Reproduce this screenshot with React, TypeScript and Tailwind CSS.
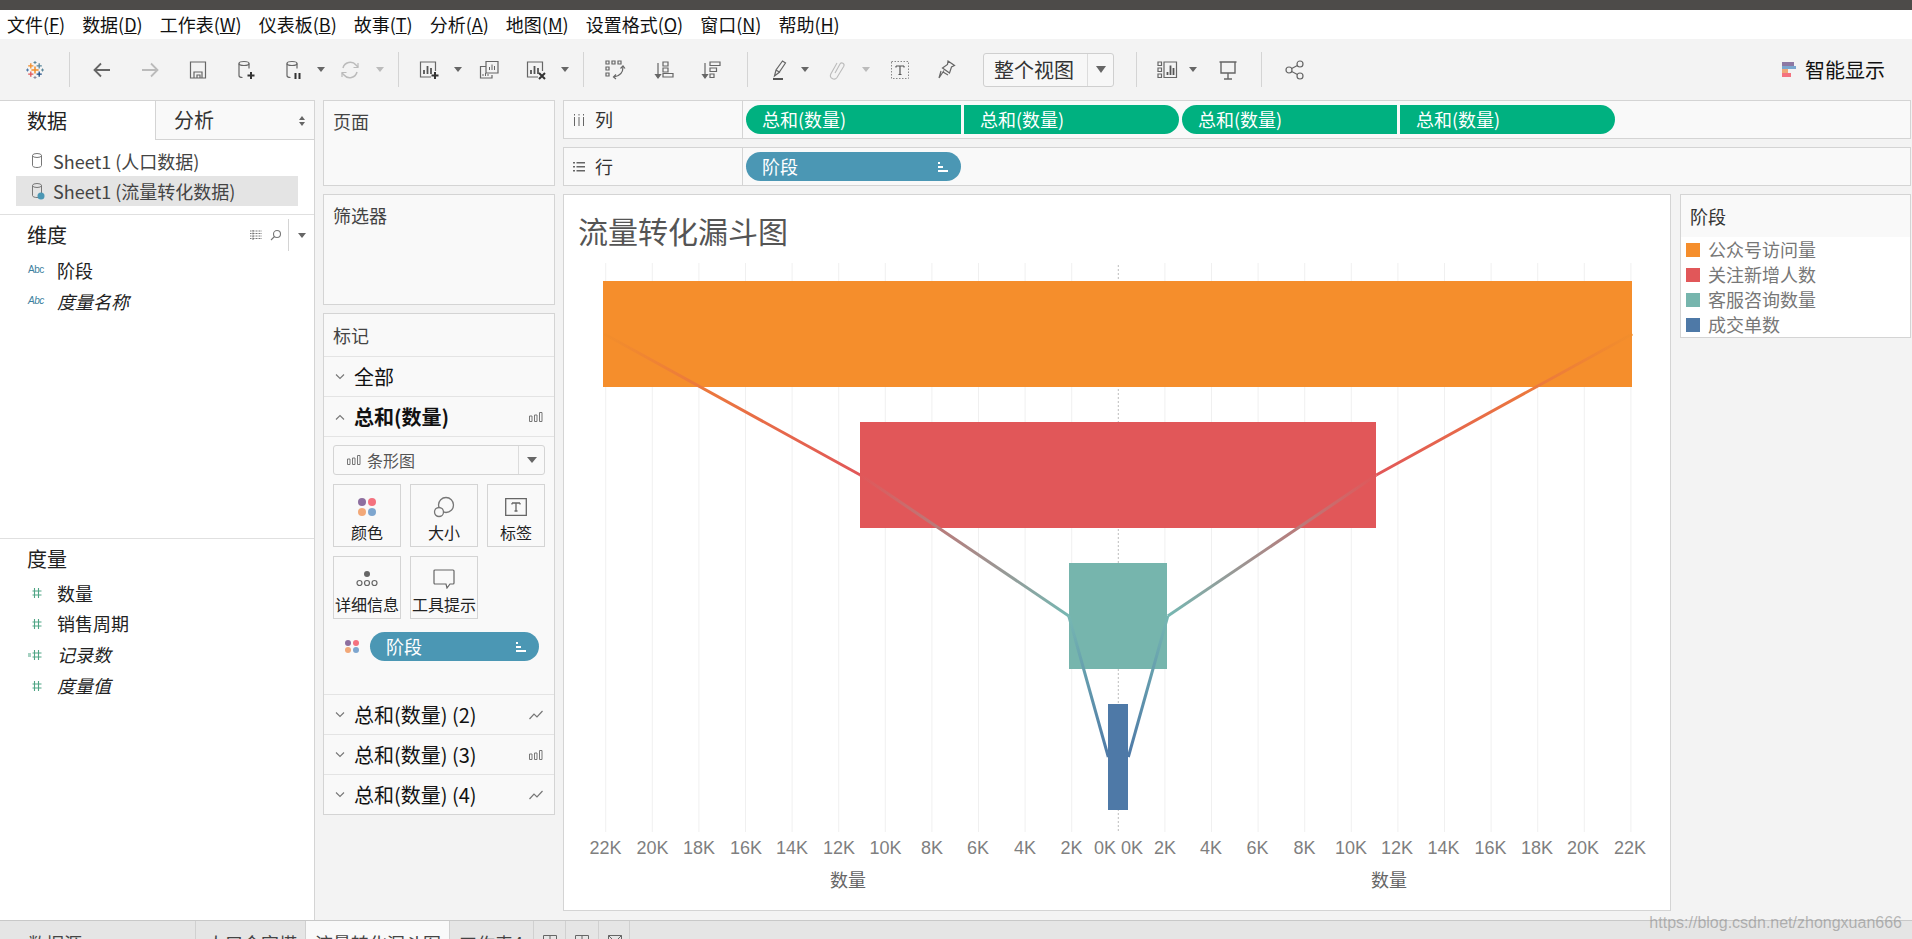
import type { ReactNode } from 'react';

const sans = 'font-["Noto_Sans_CJK_SC","Noto_Sans",sans-serif]';

const menus = [
  ['文件(', 'F'],
  ['数据(', 'D'],
  ['工作表(', 'W'],
  ['仪表板(', 'B'],
  ['故事(', 'T'],
  ['分析(', 'A'],
  ['地图(', 'M'],
  ['设置格式(', 'O'],
  ['窗口(', 'N'],
  ['帮助(', 'H'],
];

function Ico({ children, className = 'w-6 h-6', stroke = '#666' }: { children: ReactNode; className?: string; stroke?: string }) {
  return (
    <svg viewBox="0 0 24 24" className={className} fill="none" stroke={stroke} strokeWidth="1.2">
      {children}
    </svg>
  );
}

function Slot({ className, children }: { className: string; children?: ReactNode }) {
  return <div className={`flex shrink-0 items-center justify-center ${className}`}>{children}</div>;
}

function Caret({ light }: { light?: boolean }) {
  return (
    <svg viewBox="0 0 8 5" className="w-2 h-[5px]">
      <path d="M0 0h8L4 5z" fill={light ? '#bbb' : '#666'} />
    </svg>
  );
}

function Sep() {
  return <div className="w-px h-[35px] shrink-0 bg-[#d4d4d4]" />;
}

function TableauLogo() {
  const plus = (x: number, y: number, r: number, c: string, w = 1.3) => (
    <path d={`M${x - r} ${y}h${r * 2}M${x} ${y - r}v${r * 2}`} stroke={c} strokeWidth={w} />
  );
  return (
    <Ico>
      {plus(12, 12, 3.6, '#f28e2b', 1.5)}
      {plus(7.8, 7.8, 2.6, '#f28e2b')}
      {plus(16.2, 7.8, 2.6, '#5b879b')}
      {plus(7.8, 16.2, 2.6, '#e15759')}
      {plus(16.2, 16.2, 2.6, '#1f4e86')}
      {plus(12, 4.5, 1.5, '#5b879b', 1)}
      {plus(12, 19.5, 1.5, '#8a8aa0', 1)}
      {plus(4.5, 12, 1.5, '#4e79a7', 1)}
      {plus(19.5, 12, 1.5, '#5b879b', 1)}
    </Ico>
  );
}

function DbShape() {
  return (
    <>
      <ellipse cx="10" cy="5.5" rx="5" ry="2" />
      <path d="M5 5.5v12c0 1 1.5 2 3.5 2M15 5.5v5" />
    </>
  );
}

function BarChartBox() {
  return (
    <>
      <path d="M14 19H3.5V4h15v9" />
      <path d="M7 16v-4M10.5 16V8M14 16v-6" strokeWidth="1.8" stroke="#555" />
    </>
  );
}

function Toolbar() {
  return (
    <div className="flex items-center h-[61px] shrink-0 bg-[#f3f3f3]">
      <Slot className="w-[69px]"><TableauLogo /></Slot>
      <Sep />
      <Slot className="w-[48px] ml-2">
        <Ico stroke="#666"><path d="M20 12H5M11 5.5L4.5 12l6.5 6.5" strokeWidth="1.8" /></Ico>
      </Slot>
      <Slot className="w-[48px]">
        <Ico stroke="#bbb"><path d="M4 12h15M13 5.5l6.5 6.5-6.5 6.5" strokeWidth="1.8" /></Ico>
      </Slot>
      <Slot className="w-[48px]">
        <Ico><path d="M4.5 4h15v16h-15zM8 20v-6h8v6M11 20v-3h3v3" /></Ico>
      </Slot>
      <Slot className="w-[48px]">
        <Ico>
          <DbShape />
          <path d="M17 14v7M13.5 17.5h7" stroke="#333" strokeWidth="2" />
        </Ico>
      </Slot>
      <Slot className="w-[47px]">
        <Ico>
          <DbShape />
          <path d="M13.5 15v6M17.5 15v6" stroke="#333" strokeWidth="2" />
        </Ico>
      </Slot>
      <Slot className="w-[8px]"><Caret /></Slot>
      <Slot className="w-[49px]">
        <Ico stroke="#bbb">
          <path d="M5 10a7.5 7.5 0 0 1 13-3l2 2M19 14a7.5 7.5 0 0 1-13 3l-2-2" strokeWidth="1.5" />
          <path d="M20 5v4.5h-4.5M4 19v-4.5h4.5" strokeWidth="1.2" />
        </Ico>
      </Slot>
      <Slot className="w-[12px]"><Caret light /></Slot>
      <Slot className="w-[12px]" />
      <Sep />
      <Slot className="w-[60px]">
        <Ico>
          <BarChartBox />
          <path d="M18 14v7M14.5 17.5h7" stroke="#333" strokeWidth="2" />
        </Ico>
      </Slot>
      <Slot className="w-[8px] -ml-[5px]"><Caret /></Slot>
      <Slot className="w-[54px]">
        <Ico>
          <path d="M9 8.5h-5.5V20H15v-3" />
          <path d="M9 3.5h12V15H9z" />
          <path d="M12.5 12V9M15 12V6.5M17.5 12V8M6 18v-2M8.5 18v-3M11 18v-2" strokeWidth="1" />
        </Ico>
      </Slot>
      <Slot className="w-[40px]">
        <Ico>
          <BarChartBox />
          <path d="M15 15l6 6M21 15l-6 6" stroke="#333" strokeWidth="2" />
        </Ico>
      </Slot>
      <Slot className="w-[8px] ml-[5px]"><Caret /></Slot>
      <Slot className="w-[14px]" />
      <Sep />
      <Slot className="w-[62px]">
        <Ico>
          <path d="M3 3h3v3H3zM9 3h3v3H9zM15 3h3v3h-3zM3 9h3v3H3zM3 15h3v3H3z" />
          <path d="M20 9c0 5-3 9-9 10" />
          <path d="M17.5 10.5L20 8l2 2.5M13 16.5L10.5 19l2.5 2" />
        </Ico>
      </Slot>
      <Slot className="w-[48px] -ml-[5px]">
        <Ico>
          <path d="M5 5v14" />
          <path d="M2.5 16.5L5 20l2.5-3.500z" fill="#666" />
          <path d="M10 4h5v4h-5zM10 10h5v4h-5zM10 15.500h10v3.500H10z" />
        </Ico>
      </Slot>
      <Slot className="w-[46px]">
        <Ico>
          <path d="M5 5v14" />
          <path d="M2.5 16.500L5 20l2.500-3.500z" fill="#666" />
          <path d="M10 4h10v3.500H10zM10 10h6.500v3.500H10zM10 16h4v3.500h-4z" />
        </Ico>
      </Slot>
      <Slot className="w-[12px]" />
      <Sep />
      <Slot className="w-[64px]">
        <Ico>
          <path d="M6.500 18l1.500-6 6.500-9 3 2-6.500 9.500zM8 12l4 2.500" />
          <path d="M5 21h10" stroke="#555" strokeWidth="2" />
        </Ico>
      </Slot>
      <Slot className="w-[8px] -ml-[11px]"><Caret /></Slot>
      <Slot className="w-[55px]">
        <Ico stroke="#bbb">
          <path d="M10 15l5-9a2.200 2.200 0 0 1 3.800 2.200L12 19.500a3.600 3.600 0 0 1-6.200-3.600L12 5" strokeWidth="1.100" />
        </Ico>
      </Slot>
      <Slot className="w-[8px] -ml-[2px]"><Caret light /></Slot>
      <Slot className="w-[60px]">
        <Ico>
          <path d="M3.500 3.500h17v17h-17z" strokeDasharray="1.500 1.500" stroke="#888" strokeWidth="1" />
          <path d="M8 8h8M12 8v8.500M10.500 16.500h3M8 8v1.500M16 8v1.500" stroke="#555" />
        </Ico>
      </Slot>
      <Slot className="w-[32px]">
        <Ico>
          <path d="M14 3l6.500 4.500-3 1.500-2 6-7-5 5-3.500zM10 12.500L5 20l2-7 M9 14l5 3" />
        </Ico>
      </Slot>
      <Slot className="w-[21px]" />
      <div className="flex items-stretch shrink-0 w-[131px] h-[34px] border border-[#cfcfcf] rounded-[3px] bg-[#f7f7f7]">
        <div className="flex-1 flex items-center pl-[10px] text-[20px] text-[#333]">整个视图</div>
        <div className="w-[26px] flex items-center justify-center border-l border-[#dcdcdc]">
          <svg viewBox="0 0 10 7" className="w-[10px] h-[7px]"><path d="M0 0h10L5 7z" fill="#666" /></svg>
        </div>
      </div>
      <Slot className="w-[22px]" />
      <Sep />
      <Slot className="w-[60px]">
        <Ico>
          <path d="M3 4h3.500v3.500H3zM3 10h3.500v3.500H3zM3 16h3.500v3.500H3zM9 4h12.500v15.500H9z" />
          <path d="M12.500 17v-3M15.500 17V7.500M18.500 17v-7" strokeWidth="1.800" stroke="#555" />
        </Ico>
      </Slot>
      <Slot className="w-[8px] -ml-[8px]"><Caret /></Slot>
      <Slot className="w-[61px]">
        <Ico>
          <path d="M3.500 4h17M5 4v11h14V4M12 15v6M8 21h8" strokeWidth="1.400" />
        </Ico>
      </Slot>
      <Slot className="w-[3px]" />
      <Sep />
      <Slot className="w-[65px]">
        <Ico>
          <circle cx="6" cy="12" r="3" />
          <circle cx="17" cy="6" r="3" />
          <circle cx="17" cy="18" r="3" />
          <path d="M8.700 10.500l5.700-3M8.700 13.500l5.700 3" />
        </Ico>
      </Slot>
      <div className="ml-auto mr-[27px] flex items-center gap-[9px] text-[20px] text-[#111]">
        <div className="flex flex-col w-[14px]">
          <div className="h-1 w-[12px] bg-[#8d78a3]" />
          <div className="h-[3px] w-[14px] bg-[#7aa6cf]" />
          <div className="h-1 w-[6px] bg-[#f0a878]" />
          <div className="h-1 w-[9px] bg-[#f4727f]" />
        </div>
        智能显示
      </div>
    </div>
  );
}

function DbIcon({ check }: { check?: boolean }) {
  return (
    <svg viewBox="0 0 14 18" className="w-[14px] h-[18px] shrink-0" fill="none" stroke="#777" strokeWidth="1">
      <ellipse cx="6" cy="3.500" rx="4.500" ry="2" />
      <path d="M1.500 3.500v10c0 1.200 2 2 4.500 2s4.500-.8 4.500-2v-10" />
      {check && <circle cx="10" cy="14" r="3.500" fill="#4b97b4" stroke="none" />}
    </svg>
  );
}

function Hash({ extra }: { extra?: boolean }) {
  return (
    <svg viewBox="0 0 16 12" className="w-4 h-3 shrink-0" fill="none" stroke="#4fa585" strokeWidth="1.100">
      {extra && <path d="M0 5h3M0 7h3" />}
      <path d="M6.500 1v10M10.500 1v10M4.500 4h9M4.500 8h9" />
    </svg>
  );
}

function Abc() {
  return <span className='w-[20px] shrink-0 text-[10px] leading-none tracking-tighter text-[#3d7f9e] font-["Liberation_Sans",sans-serif]'>Abc</span>;
}

function DataPane() {
  return (
    <div className="w-[315px] shrink-0 flex flex-col bg-white border-r border-t border-[#d4d4d4]">
      <div className="flex h-[39px] shrink-0">
        <div className="w-[155px] pl-[27px] flex items-center text-[20px] text-[#222]">数据</div>
        <div className="relative flex-1 pl-[18px] flex items-center text-[20px] text-[#333] bg-[#f9f9f9] border-l border-b border-[#d4d4d4]">
          分析
          <svg viewBox="0 0 6 10" className="absolute right-[9px] top-[15px] w-[6px] h-[10px]"><path d="M0 4l3-4 3 4zM0 6l3 4 3-4z" fill="#666" /></svg>
        </div>
      </div>
      <div className="h-[36px] pl-[31px] pt-[6px] flex items-center gap-2 text-[18px] text-[#444]">
        <DbIcon />
        Sheet1 (人口数据)
      </div>
      <div className="h-[30px] mx-4 pl-[15px] flex items-center gap-2 text-[18px] text-[#444] bg-[#e4e4e4]">
        <DbIcon check />
        Sheet1 (流量转化数据)
      </div>
      <div className="mt-2 border-t border-[#e0e0e0] h-[324px] shrink-0">
        <div className="relative h-[40px] pl-[27px] flex items-center text-[20px] text-[#222]">
          维度
          <div className="absolute right-[8px] top-[4px] h-8 flex items-center">
            <svg viewBox="0 0 12 10" className="w-3 h-[10px] mr-[8px]" fill="none" stroke="#777" strokeWidth="1"><path d="M0 1h12M0 3.500h12M0 6h12M0 8.500h12M3 0v10" strokeDasharray="1 .5" /></svg>
            <svg viewBox="0 0 12 12" className="w-3 h-3 mr-[6px]" fill="none" stroke="#777" strokeWidth="1.100"><circle cx="7" cy="5" r="3.500" /><path d="M4.500 7.500L1 11" /></svg>
            <div className="w-px h-8 bg-[#d4d4d4] mr-[9px]" />
            <svg viewBox="0 0 8 5" className="w-2 h-[5px]"><path d="M0 0h8L4 5z" fill="#666" /></svg>
          </div>
        </div>
        <div className="h-[30px] pl-[28px] flex items-center gap-[9px] text-[18px] text-[#222]"><Abc />阶段</div>
        <div className="h-[32px] pl-[28px] flex items-center gap-[9px] text-[18px] italic text-[#222]"><Abc />度量名称</div>
      </div>
      <div className="border-t border-[#e0e0e0] flex-1">
        <div className="h-[39px] pl-[27px] flex items-center text-[20px] text-[#222]">度量</div>
        <div className="h-[30px] pl-[28px] flex items-center gap-[13px] text-[18px] text-[#222]"><Hash />数量</div>
        <div className="h-[31px] pl-[28px] flex items-center gap-[13px] text-[18px] text-[#222]"><Hash />销售周期</div>
        <div className="h-[31px] pl-[28px] flex items-center gap-[13px] text-[18px] italic text-[#222]"><Hash extra />记录数</div>
        <div className="h-[31px] pl-[28px] flex items-center gap-[13px] text-[18px] italic text-[#222]"><Hash />度量值</div>
      </div>
    </div>
  );
}

function Chevron({ up }: { up?: boolean }) {
  return (
    <svg viewBox="0 0 10 6" className="w-[10px] h-[6px] shrink-0" fill="none" stroke="#777" strokeWidth="1.100">
      <path d={up ? 'M1 5.500L5 1.500l4 4' : 'M1 .5l4 4 4-4'} />
    </svg>
  );
}

function BarsMini() {
  return (
    <svg viewBox="0 0 14 10" className="w-[14px] h-[12px] shrink-0" fill="none" stroke="#777" strokeWidth="1">
      <path d="M.5 4h2.500v5.500H.5zM5.500 3h2.500v6.500H5.500zM10.500.5H13v9h-2.500z" />
    </svg>
  );
}

function LineMini() {
  return (
    <svg viewBox="0 0 14 10" className="w-[14px] h-[10px] shrink-0" fill="none" stroke="#777" strokeWidth="1.200">
      <path d="M.5 9l4.500-5 3 3 5.500-6" />
    </svg>
  );
}

function MarkRow({ label, icon, up, bold }: { label: string; icon?: ReactNode; up?: boolean; bold?: boolean }) {
  return (
    <div className={`h-10 px-[11px] flex items-center text-[20px] border-t border-[#e4e4e4] text-[#111] ${bold ? 'font-bold' : ''}`}>
      <Chevron up={up} />
      <span className="ml-[9px] flex-1">{label}</span>
      {icon}
    </div>
  );
}

function MarkButton({ label, className, children }: { label: string; className: string; children: ReactNode }) {
  return (
    <div className={`h-[63px] border border-[#d4d4d4] flex flex-col items-center pt-[8px] text-[16px] leading-[20px] text-[#222] whitespace-nowrap ${className}`}>
      <div className="h-[27px] flex items-center mb-[2px]">{children}</div>
      {label}
    </div>
  );
}

function MarksCard() {
  return (
    <div className="h-[502px] border border-[#d4d4d4] bg-[#f9f9f9] flex flex-col">
      <div className="h-[42px] pl-[9px] flex items-center text-[18px] text-[#444]">标记</div>
      <MarkRow label="全部" />
      <MarkRow label="总和(数量)" up bold icon={<BarsMini />} />
      <div className="border-t border-[#e4e4e4] pt-2 px-[9px] h-[258px]">
        <div className="flex h-[30px] w-[212px] border border-[#d4d4d4] rounded-[3px] bg-[#f9f9f9]">
          <div className="flex-1 pl-[13px] flex items-center gap-[6px] text-[16px] text-[#555]"><BarsMini />条形图</div>
          <div className="w-[26px] border-l border-[#dcdcdc] flex items-center justify-center">
            <svg viewBox="0 0 10 6" className="w-[10px] h-[6px]"><path d="M0 0h10L5 6z" fill="#666" /></svg>
          </div>
        </div>
        <div className="flex gap-[9px] mt-[9px]">
          <MarkButton label="颜色" className="w-[68px]">
            <div className="grid grid-cols-2 gap-[2px]">
              <div className="w-[8px] h-[8px] rounded-full bg-[#8d6f9f]" />
              <div className="w-[8px] h-[8px] rounded-full bg-[#f4727f]" />
              <div className="w-[8px] h-[8px] rounded-full bg-[#f2a878]" />
              <div className="w-[8px] h-[8px] rounded-full bg-[#7ea6cf]" />
            </div>
          </MarkButton>
          <MarkButton label="大小" className="w-[68px]">
            <svg viewBox="0 0 22 22" className="w-[22px] h-[22px]" fill="none" stroke="#777" strokeWidth="1.300">
              <circle cx="13" cy="9" r="7.500" />
              <circle cx="6" cy="16" r="4.500" fill="#f9f9f9" />
            </svg>
          </MarkButton>
          <MarkButton label="标签" className="w-[58px]">
            <svg viewBox="0 0 22 18" className="w-[22px] h-[18px]" fill="none" stroke="#666" strokeWidth="1.300">
              <path d="M.7.7h20.600v16.600H.7z" />
              <path d="M7 5h8M11 5v8M9.500 13h3M7 5v1.500M15 5v1.500" />
            </svg>
          </MarkButton>
        </div>
        <div className="flex gap-[9px] mt-[9px]">
          <MarkButton label="详细信息" className="w-[68px]">
            <svg viewBox="0 0 24 20" className="w-6 h-5" fill="none" stroke="#666" strokeWidth="1.200">
              <circle cx="12" cy="5" r="3" fill="#666" stroke="none" />
              <circle cx="4.500" cy="14" r="2.500" />
              <circle cx="12" cy="14" r="2.500" />
              <circle cx="19.500" cy="14" r="2.500" />
            </svg>
          </MarkButton>
          <MarkButton label="工具提示" className="w-[68px]">
            <svg viewBox="0 0 22 20" className="w-[22px] h-5" fill="none" stroke="#666" strokeWidth="1.200">
              <path d="M2 1h18a1 1 0 0 1 1 1v12a1 1 0 0 1-1 1h-3l-3 4-1-4H2a1 1 0 0 1-1-1V2a1 1 0 0 1 1-1z" />
            </svg>
          </MarkButton>
        </div>
        <div className="flex items-center mt-[13px] pl-[12px]">
          <div className="grid grid-cols-2 gap-px w-[15px] shrink-0">
            <div className="w-[6px] h-[6px] rounded-full bg-[#8d6f9f]" />
            <div className="w-[6px] h-[6px] rounded-full bg-[#f4727f]" />
            <div className="w-[6px] h-[6px] rounded-full bg-[#f2a878]" />
            <div className="w-[6px] h-[6px] rounded-full bg-[#7ea6cf]" />
          </div>
          <div className="ml-[10px] w-[169px] h-[29px] rounded-full bg-[#4b97b4] flex items-center justify-between pl-4 pr-[13px] text-[18px] text-white">
            阶段
            <SortMini />
          </div>
        </div>
      </div>
      <MarkRow label="总和(数量) (2)" icon={<LineMini />} />
      <MarkRow label="总和(数量) (3)" icon={<BarsMini />} />
      <MarkRow label="总和(数量) (4)" icon={<LineMini />} />
    </div>
  );
}

function SortMini() {
  return (
    <svg viewBox="0 0 10 10" className="w-[10px] h-[10px]">
      <path d="M0 0h2v2H0zM0 4h5v2H0zM0 8h10v2H0z" fill="#fff" />
    </svg>
  );
}

function Shelves() {
  return (
    <div className="flex flex-col gap-[8px]">
      <div className="h-[39px] flex border border-[#d4d4d4] bg-[#f9f9f9]">
        <div className="w-[179px] border-r border-[#d4d4d4] flex items-center pl-[9px] text-[18px] text-[#333]">
          <svg viewBox="0 0 12 12" className="w-3 h-3 mr-[10px]"><path d="M1 0h1v1.500H1zM1 3h1v9H1zM5.500 0h1v1.500h-1zM5.500 3h1v9h-1zM10 0h1v1.500h-1zM10 3h1v9h-1z" fill="#666" /></svg>
          列
        </div>
        <div className="flex items-center gap-[3px] pl-[3px] text-[18px] text-white">
          <div className="w-[215px] h-[29px] pl-4 flex items-center bg-[#00b180] rounded-l-full">总和(数量)</div>
          <div className="w-[215px] h-[29px] pl-4 flex items-center bg-[#00b180] rounded-r-full">总和(数量)</div>
          <div className="w-[215px] h-[29px] pl-4 flex items-center bg-[#00b180] rounded-l-full">总和(数量)</div>
          <div className="w-[215px] h-[29px] pl-4 flex items-center bg-[#00b180] rounded-r-full">总和(数量)</div>
        </div>
      </div>
      <div className="h-[39px] flex border border-[#d4d4d4] bg-[#f9f9f9]">
        <div className="w-[179px] border-r border-[#d4d4d4] flex items-center pl-[9px] text-[18px] text-[#333]">
          <svg viewBox="0 0 12 10" className="w-3 h-[10px] mr-[10px]"><path d="M0 0h2v1.500H0zM3.500 0H12v1.500H3.500zM0 4h2v1.500H0zM3.500 4H12v1.500H3.500zM0 8h2v1.500H0zM3.500 8H12v1.500H3.500z" fill="#666" /></svg>
          行
        </div>
        <div className="flex items-center pl-[3px]">
          <div className="w-[215px] h-[29px] pl-4 pr-[13px] flex items-center justify-between rounded-full bg-[#4b97b4] text-[18px] text-white">
            阶段
            <SortMini />
          </div>
        </div>
      </div>
    </div>
  );
}

const CX = 1118.3;
const STEP = 46.6;
const gridKs = [1, 2, 3, 4, 5, 6, 7, 8, 9, 10, 11];

function Chart() {
  const leftLabels = [605.6, 652.6, 699, 746, 792, 839, 885.6, 932, 978, 1025, 1071.6];
  const rightLabels = [1630, 1583, 1537, 1490.5, 1443.5, 1397, 1351, 1304.5, 1257.5, 1211, 1165];
  const pts = [
    { dx: 514, y: 334 },
    { dx: 258, y: 475 },
    { dx: 49.5, y: 616 },
    { dx: 10, y: 757 },
  ];
  return (
    <svg viewBox="564 263 1106 647" className="block w-[1106px] h-[647px]">
      <defs>
        {[-1, 1].map((side) => (
          <g key={side}>
            {[0, 1, 2].map((i) => {
              const colors = [['#f28e2b', '#e15759'], ['#e15759', '#76b7b2'], ['#76b7b2', '#4e79a7']][i];
              return (
                <linearGradient
                  key={i}
                  id={`seg-${side}-${i}`}
                  gradientUnits="userSpaceOnUse"
                  x1={CX + side * pts[i].dx}
                  y1={pts[i].y}
                  x2={CX + side * pts[i + 1].dx}
                  y2={pts[i + 1].y}
                >
                  <stop offset="0" stopColor={colors[0]} />
                  <stop offset="1" stopColor={colors[1]} />
                </linearGradient>
              );
            })}
          </g>
        ))}
      </defs>
      {gridKs.map((k) => (
        <g key={k} stroke="#f0f0f0" strokeWidth="1">
          <line x1={CX - STEP * k} y1="263" x2={CX - STEP * k} y2="832" />
          <line x1={CX + STEP * k} y1="263" x2={CX + STEP * k} y2="832" />
        </g>
      ))}
      <line x1={CX} y1="265" x2={CX} y2="832" stroke="#bdbdbd" strokeWidth="1" strokeDasharray="2 2" />
      <rect x="603" y="281" width="1029" height="106" fill="#f58e2c" />
      <rect x="860" y="422" width="516" height="106" fill="#e15759" />
      <rect x="1069" y="563" width="98" height="106" fill="#76b5ad" />
      <rect x="1108" y="704" width="20" height="106" fill="#4e79a7" />
      {[-1, 1].map((side) =>
        [0, 1, 2].map((i) => (
          <line
            key={`${side}-${i}`}
            x1={CX + side * pts[i].dx}
            y1={pts[i].y}
            x2={CX + side * pts[i + 1].dx}
            y2={pts[i + 1].y}
            stroke={`url(#seg-${side}-${i})`}
            strokeWidth="3"
          />
        )),
      )}
      <g className='font-["Liberation_Sans",sans-serif]' fontSize="18" fill="#7f7f7f" textAnchor="middle">
        {leftLabels.map((x, i) => (
          <text key={x} x={x} y="854">{`${22 - i * 2}K`}</text>
        ))}
        <text x="1105" y="854">0K</text>
        <text x="1132" y="854">0K</text>
        {rightLabels.map((x, i) => (
          <text key={x} x={x} y="854">{`${22 - i * 2}K`}</text>
        ))}
      </g>
      <g fontSize="18" fill="#666" textAnchor="middle">
        <text x="848" y="887">数量</text>
        <text x="1389" y="887">数量</text>
      </g>
    </svg>
  );
}

function Legend() {
  const items = [
    ['公众号访问量', 'bg-[#f58e2c]'],
    ['关注新增人数', 'bg-[#e15759]'],
    ['客服咨询数量', 'bg-[#76b5ad]'],
    ['成交单数', 'bg-[#4e79a7]'],
  ];
  return (
    <div className="w-[231px] h-[144px] border border-[#d4d4d4] bg-white">
      <div className="h-[42px] pl-[9px] flex items-center bg-[#f9f9f9] text-[18px] text-[#333]">阶段</div>
      <div className="pl-[5px]">
        {items.map(([label, color]) => (
          <div key={label} className="h-[25px] flex items-center gap-[8px] text-[18px] leading-[25px] text-[#777]">
            <div className={`w-[14px] h-[14px] ${color}`} />
            {label}
          </div>
        ))}
      </div>
    </div>
  );
}

function TabGlyph({ x }: { x?: boolean }) {
  return (
    <svg viewBox="0 0 14 14" className="w-[14px] h-[14px]" fill="none" stroke="#666" strokeWidth="1">
      <path d="M.5.5h13v13H.5z" />
      {x ? <path d="M.5.5l13 13M13.500.5l-13 13" /> : <path d="M.5 5h13M7 .5V5" />}
    </svg>
  );
}

function StatusBar() {
  return (
    <div className="flex h-[19px] shrink-0 overflow-hidden bg-[#e5e5e5] border-t border-[#c8c8c8] text-[18px] leading-[24px] text-[#444]">
      <div className="w-[196px] pl-[28px] pt-[10px] border-r border-[#d0d0d0]">数据源</div>
      <div className="w-[110px] pl-[11px] pt-[10px] border-r border-[#d0d0d0] whitespace-nowrap">人口金字塔</div>
      <div className="w-[144px] pl-[9px] pt-[10px] bg-[#f9f9f9] border-r border-[#d0d0d0] whitespace-nowrap">流量转化漏斗图</div>
      <div className="w-[84px] pl-[9px] pt-[10px] border-r border-[#d0d0d0] whitespace-nowrap">工作表4</div>
      <div className="w-[32px] pl-[9px] pt-[14px] border-r border-[#d0d0d0]"><TabGlyph /></div>
      <div className="w-[33px] pl-[9px] pt-[14px] border-r border-[#d0d0d0]"><TabGlyph /></div>
      <div className="w-[31px] pl-[9px] pt-[14px] border-r border-[#d0d0d0]"><TabGlyph x /></div>
    </div>
  );
}

export default function App() {
  return (
    <div className={`relative h-[939px] w-[1912px] overflow-hidden flex flex-col bg-[#f3f3f3] ${sans}`}>
      <div className="h-[10px] shrink-0 bg-[#4d4b49]" />
      <div className="h-[29px] shrink-0 pl-[7px] flex items-center gap-[17px] bg-white text-[18px] text-[#111]">
        {menus.map(([text, key]) => (
          <span key={key}>
            {text}
            <span className="underline">{key}</span>)
          </span>
        ))}
      </div>
      <Toolbar />
      <div className="flex h-[820px] shrink-0">
        <DataPane />
        <div className="w-[232px] ml-2 flex flex-col gap-[8px] shrink-0">
          <div className="h-[86px] border border-[#d4d4d4] bg-[#f9f9f9] pl-[9px] pt-[7px] text-[18px] text-[#444]">页面</div>
          <div className="h-[111px] border border-[#d4d4d4] bg-[#f9f9f9] pl-[9px] pt-[7px] text-[18px] text-[#444]">筛选器</div>
          <MarksCard />
        </div>
        <div className="ml-2 w-[1348px] flex flex-col gap-[8px]">
          <Shelves />
          <div className="flex gap-[9px] items-start">
            <div className="w-[1108px] h-[717px] shrink-0 border border-[#d4d4d4] bg-white">
              <div className="h-[68px] pl-[14px] pt-[2px] flex items-center text-[30px] text-[#555]">流量转化漏斗图</div>
              <Chart />
            </div>
            <Legend />
          </div>
        </div>
      </div>
      <StatusBar />
      <div className="absolute right-[10px] top-[911px] text-[16px] text-[#8a8a8a]/60 font-['Liberation_Sans',sans-serif]">https://blog.csdn.net/zhongxuan666</div>
    </div>
  );
}
